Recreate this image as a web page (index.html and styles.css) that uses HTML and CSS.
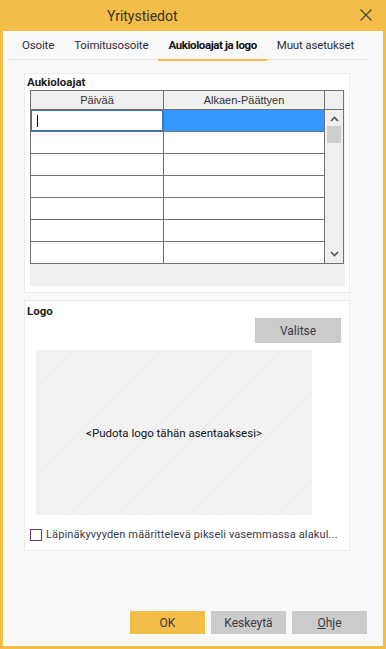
FILE: index.html
```html
<!DOCTYPE html>
<html>
<head>
    <title>Yritystiedot</title>
    <link rel="stylesheet" href="styles.css">
</head>
<body>
    <div class="window">
        <div class="titlebar">
            <span class="title">Yritystiedot</span>
            <svg class="close" width="12" height="12" viewBox="0 0 12 12">
                <path d="M0.5 0.5 L11.5 11.5 M11.5 0.5 L0.5 11.5" stroke="#444" stroke-width="1.1" fill="none"/>
            </svg>
        </div>

        <div class="tabs">
            <div class="tab">Osoite</div>
            <div class="tab">Toimitusosoite</div>
            <div class="tab active">Aukioloajat ja logo</div>
            <div class="tab">Muut asetukset</div>
        </div>

        <div class="panel hours">
            <div class="panel-label">Aukioloajat</div>
            <div class="grid-wrap">
                <table class="grid">
                    <colgroup>
                        <col class="c1">
                        <col class="c2">
                        <col class="c3">
                    </colgroup>
                    <tr class="head">
                        <th>Päivää</th>
                        <th>Alkaen-Päättyen</th>
                        <th></th>
                    </tr>
                    <tr>
                        <td class="editing"><span class="caret"></span></td>
                        <td class="selected"></td>
                        <td class="scroll" rowspan="7">
                            <div class="scrollbar">
                                <svg class="arrow" width="9" height="6" viewBox="0 0 9 6"><path d="M1 5 L4.5 1.5 L8 5" stroke="#555" stroke-width="1.6" fill="none"/></svg>
                                <div class="thumb"></div>
                                <div class="track"></div>
                                <svg class="arrow" width="9" height="6" viewBox="0 0 9 6"><path d="M1 1 L4.5 4.5 L8 1" stroke="#555" stroke-width="1.6" fill="none"/></svg>
                            </div>
                        </td>
                    </tr>
                    <tr><td></td><td></td></tr>
                    <tr><td></td><td></td></tr>
                    <tr><td></td><td></td></tr>
                    <tr><td></td><td></td></tr>
                    <tr><td></td><td></td></tr>
                    <tr><td></td><td></td></tr>
                </table>
            </div>
        </div>

        <div class="panel logo">
            <div class="panel-label">Logo</div>
            <div class="logo-bar">
                <button class="btn">Valitse</button>
            </div>
            <div class="dropzone">&lt;Pudota logo tähän asentaaksesi&gt;</div>
            <label class="check">
                <span class="box"></span>
                <span class="check-text">Läpinäkyvyyden määrittelevä pikseli vasemmassa alakul...</span>
            </label>
        </div>

        <div class="actions">
            <button class="btn primary">OK</button>
            <button class="btn">Keskeytä</button>
            <button class="btn"><u>O</u>hje</button>
        </div>
    </div>
</body>
</html>
```

FILE: styles.css
```css
body {
    margin: 0;
    background-color: #f9f9f9;
    font-family: Roboto, "Noto Sans", sans-serif;
    color: #333;
}
.window {
    width: 386px;
    height: 649px;
    box-sizing: border-box;
    border: 3px solid #f3bd4a;
    border-top: none;
    background-color: #f9f9f9;
    display: flex;
    flex-direction: column;
}
.titlebar {
    height: 31px;
    margin: 0 -3px;
    background-color: #f3bd4a;
    display: flex;
    align-items: center;
    position: relative;
}
.title {
    margin-left: 107px;
    font-size: 14px;
    color: #3a3320;
}
.close {
    position: absolute;
    right: 14px;
    top: 9px;
}
.tabs {
    display: flex;
    height: 28px;
    margin: 0 16px 0 6px;
    padding-left: 6px;
    border-bottom: 1px solid #e4e4e4;
}
.tab {
    padding: 0 10px;
    font-size: 11.5px;
    letter-spacing: -0.15px;
    line-height: 28px;
    color: #2d2d3a;
    position: relative;
    white-space: nowrap;
}
.tab:first-child {
    padding-left: 7px;
}
.tab.active {
    font-weight: bold;
    letter-spacing: -0.4px;
    color: #111;
}
.tab.active::after {
    content: "";
    position: absolute;
    left: 0;
    right: 0;
    bottom: -2px;
    height: 2px;
    background-color: #f3bd4a;
}
.panel {
    background-color: #fff;
    border: 1px solid #ececec;
    margin-left: 21px;
    width: 326px;
    box-sizing: border-box;
}
.panel-label {
    font-size: 11.5px;
    font-weight: bold;
    line-height: 14px;
    padding-left: 2px;
    color: #222;
}
.hours {
    margin-top: 13px;
    height: 220px;
    padding-top: 1px;
}
.grid-wrap {
    margin: 1px 0 0 5px;
    width: 315px;
    height: 196px;
    background-color: #efefef;
}
.grid {
    border-collapse: collapse;
    table-layout: fixed;
    width: 313px;
    font-family: "Liberation Sans", Arial, sans-serif;
    font-size: 11px;
}
.grid col.c1 {
    width: 133px;
}
.grid col.c2 {
    width: 161px;
}
.grid col.c3 {
    width: 19px;
}
.grid th, .grid td {
    border: 1px solid #717171;
    padding: 0;
}
.grid .head th {
    height: 18px;
    background-color: #efefef;
    font-weight: normal;
    color: #333;
}
.grid td {
    height: 21px;
    background-color: #fff;
}
.grid td.editing {
    box-shadow: inset 0 0 0 1px #2f73c8;
    padding-left: 6px;
}
.caret {
    display: block;
    width: 1px;
    height: 12px;
    background-color: #000;
}
.grid td.selected {
    background-color: #3399ff;
}
.grid td.scroll {
    background-color: #efefef;
    vertical-align: top;
}
.scrollbar {
    height: 152px;
    display: flex;
    flex-direction: column;
    align-items: center;
}
.arrow {
    margin-top: 6px;
}
.thumb {
    width: 14px;
    height: 17px;
    margin-top: 4px;
    background-color: #cdcdcd;
}
.track {
    flex: 1;
}
.scrollbar .arrow:last-child {
    margin: 0 0 5px;
}
.logo {
    margin-top: 7px;
    height: 251px;
    padding-top: 3px;
}
.logo-bar {
    display: flex;
    justify-content: flex-end;
    padding-right: 8px;
}
.btn {
    width: 86px;
    height: 25px;
    border: none;
    background-color: #cbcbcb;
    font-family: Roboto, "Noto Sans", sans-serif;
    font-size: 12px;
    color: #3a3a44;
    padding: 0;
}
.dropzone {
    margin: 7px 0 0 11px;
    width: 276px;
    height: 165px;
    background: repeating-linear-gradient(135deg, #f4f4f4 0 2px, #ededed 2px 3px);
    display: flex;
    align-items: center;
    justify-content: center;
    font-size: 11.5px;
    color: #111;
}
.check {
    display: flex;
    align-items: center;
    margin: 13px 0 0 5px;
    font-size: 11px;
    letter-spacing: 0.15px;
    color: #3a3a44;
}
.box {
    width: 10px;
    height: 10px;
    border: 1px solid #5b3c6a;
    margin-right: 4px;
}
.check-text {
    white-space: nowrap;
}
.actions {
    margin-top: auto;
    display: flex;
    justify-content: flex-end;
    gap: 6px;
    padding: 0 16px 12px 0;
}
.actions .btn {
    width: 75px;
    height: 23px;
}
.actions .primary {
    background-color: #f3bd4a;
}
```
